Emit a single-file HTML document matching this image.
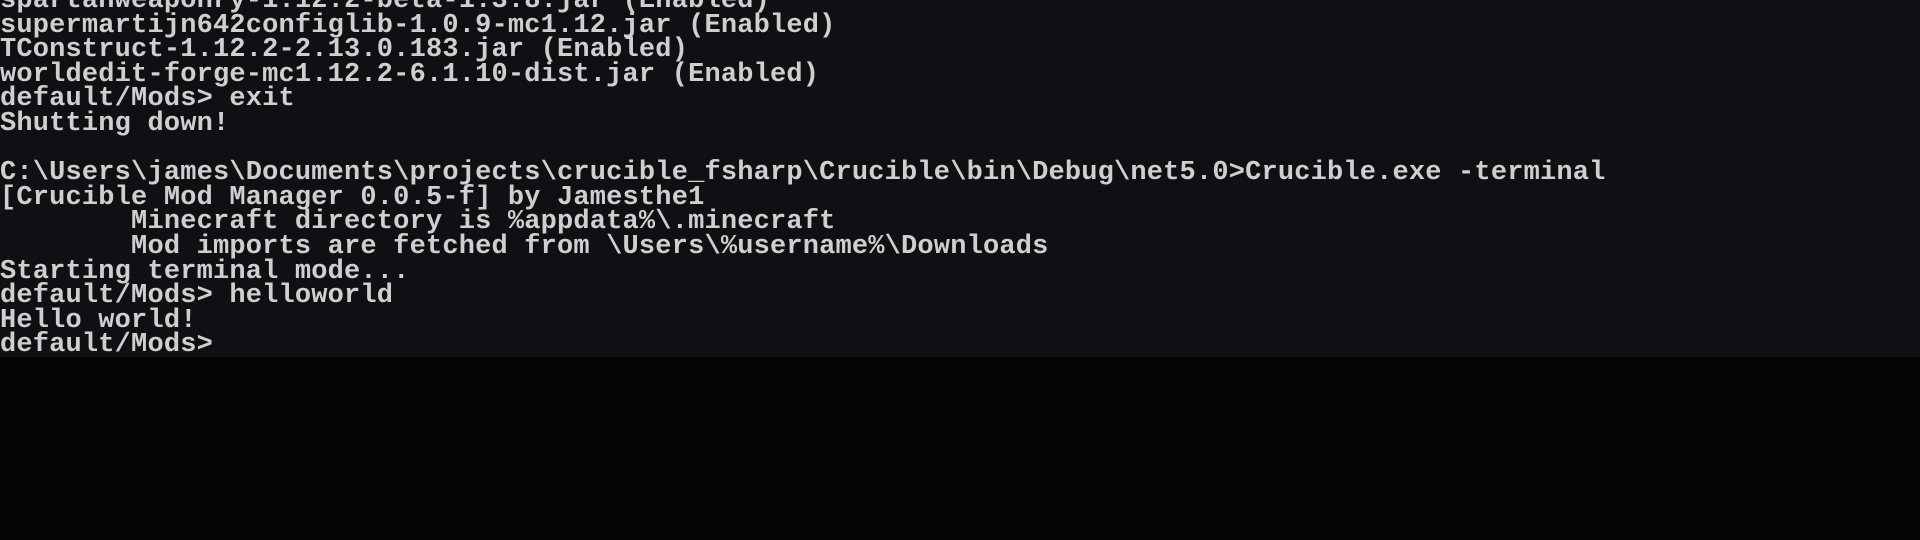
<!DOCTYPE html>
<html><head><meta charset="utf-8"><style>
html,body{margin:0;padding:0;width:1920px;height:540px;background:#040404;overflow:hidden}
#t{position:absolute;left:0;top:0;width:1920px;height:357px;background:#101014;overflow:hidden}
pre{position:absolute;left:0;top:-11px;margin:0;font-family:"Liberation Mono",monospace;font-weight:bold;font-size:27px;line-height:24.6px;color:#cfcfcf;letter-spacing:0.18px}
</style></head><body>
<div id="t"><pre>spartanweaponry-1.12.2-beta-1.3.8.jar (Enabled)
supermartijn642configlib-1.0.9-mc1.12.jar (Enabled)
TConstruct-1.12.2-2.13.0.183.jar (Enabled)
worldedit-forge-mc1.12.2-6.1.10-dist.jar (Enabled)
default/Mods&gt; exit
Shutting down!

C:\Users\james\Documents\projects\crucible_fsharp\Crucible\bin\Debug\net5.0&gt;Crucible.exe -terminal
[Crucible Mod Manager 0.0.5-f] by Jamesthe1
        Minecraft directory is %appdata%\.minecraft
        Mod imports are fetched from \Users\%username%\Downloads
Starting terminal mode...
default/Mods&gt; helloworld
Hello world!
default/Mods&gt;</pre></div>
</body></html>
